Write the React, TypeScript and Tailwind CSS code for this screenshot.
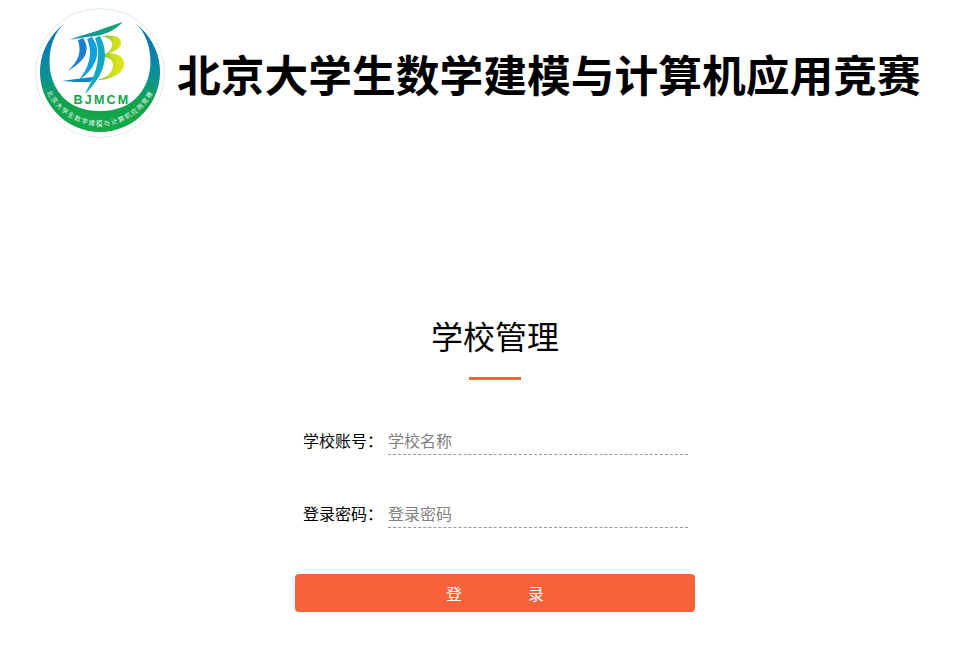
const fontStack = '[font-family:"Noto_Sans_CJK_SC","Liberation_Sans",sans-serif]'

function Logo() {
  return (
    <svg width="132" height="132" viewBox="0 0 132 132" className="shrink-0">
      <defs>
        <linearGradient id="ring" x1="0" y1="0" x2="0" y2="1">
          <stop offset="0.2" stopColor="#0a7ab0" />
          <stop offset="0.5" stopColor="#0c9490" />
          <stop offset="0.72" stopColor="#10a24c" />
          <stop offset="1" stopColor="#14a94a" />
        </linearGradient>
        <linearGradient id="bee" x1="0" y1="0" x2="1" y2="0.2">
          <stop offset="0" stopColor="#1cab5a" />
          <stop offset="0.6" stopColor="#c4dc20" />
          <stop offset="1" stopColor="#e2e41a" />
        </linearGradient>
        <linearGradient id="streak" x1="1" y1="0" x2="0" y2="0">
          <stop offset="0" stopColor="#18a860" />
          <stop offset="1" stopColor="#0e8ec4" />
        </linearGradient>
        <path id="rim" d="M 8 74 C 17 104 44 119 66 119 C 88 119 115 104 124 74" fill="none" />
      </defs>
      <circle cx="66" cy="66" r="64.5" fill="#fff" stroke="#dcefe6" strokeWidth="1" />
      <path
        d="M 30 17 A 60 60 0 1 0 102 17 C 126 38 124 104 66 104 C 8 104 6 38 30 17 Z"
        fill="url(#ring)"
      />
      <text fontSize="6.5" fill="#e8f7ee" fontFamily='"Noto Sans CJK SC", sans-serif' letterSpacing="1.3">
        <textPath href="#rim" startOffset="50%" textAnchor="middle">
          北京大学生数学建模与计算机应用竞赛
        </textPath>
      </text>
      <text x="68" y="97" textAnchor="middle" fontSize="12.5" fontWeight="700" fill="#12a54a" fontFamily='"Liberation Sans", sans-serif' letterSpacing="2.2">
        BJMCM
      </text>
      {/* B mark */}
      <path
        d="M 68 29 C 80 27 88 30 87 37 C 86 42 80 45 74 46 C 84 46 91 50 90 58 C 89 67 76 73 63 73 C 72 71 79 66 79 58 C 79 52 72 49 66 50 C 74 46 79 42 78 36 C 77 32 72 30 68 29 Z"
        fill="url(#bee)"
      />
      <path d="M 89 15 C 80 24 72 27 62 29 C 52 30 44 31 36 33 C 46 28 58 26 68 22 C 76 19 82 17 89 15 Z" fill="url(#streak)" />
      <path d="M 49 31 C 56 42 54 52 34 64 C 44 54 48 46 44 33 Z" fill="#1a7fd0" />
      <path d="M 58 30 C 68 44 64 60 44 74 C 54 62 60 48 53 32 Z" fill="#10a0e0" />
      <path d="M 66 29 C 76 48 71 68 51 87 C 60 70 69 52 61 31 Z" fill="#12a8c4" />
      <path d="M 28 74 C 40 72 50 71 60 70 L 56 75 C 46 75 38 75 28 74 Z" fill="#0d86c8" />
    </svg>
  )
}

function Field({ label, placeholder, type }: { label: string; placeholder: string; type: string }) {
  return (
    <div className="flex items-center h-[28px]">
      <label className="w-[93px] pl-[8px] pb-[2px] text-[16px] text-black whitespace-nowrap">{label}</label>
      <input
        type={type}
        placeholder={placeholder}
        className="w-[300px] h-[28px] pb-[2px] border-b border-dashed border-[#999] text-[16px] text-black outline-none placeholder:text-[#808080]"
      />
    </div>
  )
}

export default function App() {
  return (
    <div className={`min-h-[660px] bg-white overflow-hidden ${fontStack}`}>
      {/* Header */}
      <header className="flex items-center pl-[34px] pt-[7px] gap-[11px]">
        <Logo />
        <h1 className="text-[43.75px] leading-[60px] font-bold text-black whitespace-nowrap">
          北京大学生数学建模与计算机应用竞赛
        </h1>
      </header>

      {/* Login form */}
      <main className="ml-[295px] w-[400px] mt-[173px]">
        <h2 className="text-[32px] leading-[46px] font-normal text-black text-center">学校管理</h2>
        <div className="w-[52px] h-[3px] bg-[#f7623a] mx-auto mt-[19px]" />
        <div className="mt-[47px] flex flex-col gap-[45px]">
          <Field label="学校账号：" placeholder="学校名称" type="text" />
          <Field label="登录密码：" placeholder="登录密码" type="password" />
        </div>
        <button
          type="button"
          className="mt-[46px] w-full h-[38px] rounded-[4px] bg-[#f7623a] text-white text-[16px] flex items-center justify-center gap-[66px]"
        >
          <span>登</span>
          <span>录</span>
        </button>
      </main>
    </div>
  )
}
